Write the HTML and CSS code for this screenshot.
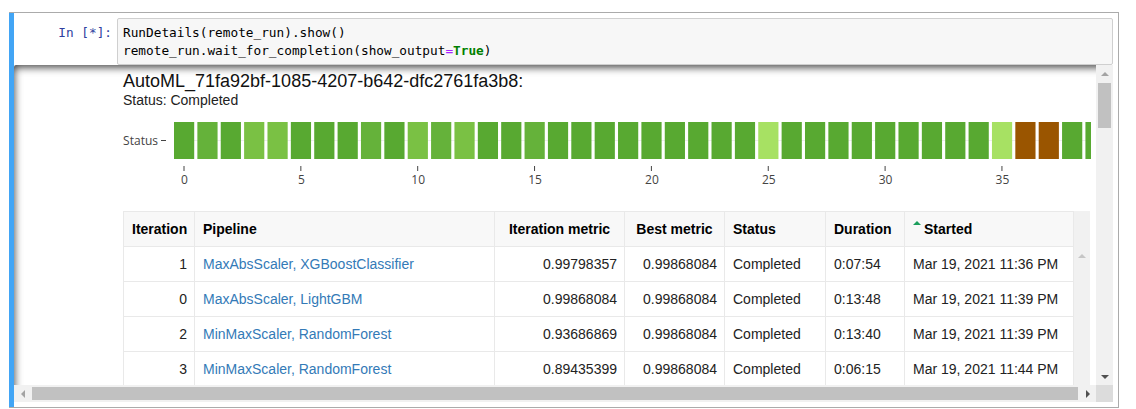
FILE: index.html
```html
<!DOCTYPE html>
<html>
<head>
<meta charset="utf-8">
<link rel="stylesheet" href="styles.css">
</head>
<body>
<div class="cell">
  <div class="input">
    <div class="prompt">In&nbsp;[*]:</div>
    <div class="code"><pre>RunDetails(remote_run).show()
remote_run.wait_for_completion(show_output<span class="op">=</span><span class="kw">True</span>)</pre></div>
  </div>
  <div class="output">
    <div class="viewport">
      <div class="widget">
        <div class="title">AutoML_71fa92bf-1085-4207-b642-dfc2761fa3b8:</div>
        <div class="status">Status: Completed</div>
        <svg class="chart" width="968" height="102" viewBox="0 0 968 102">
          <line class="grid" x1="51" y1="31.5" x2="968" y2="31.5"/>
          <text class="ylabel" x="35" y="36" text-anchor="end">Status</text>
          <line class="tick" x1="38" y1="31.5" x2="43" y2="31.5"/>
          <g class="bars">
            <rect class="b1" x="51" y="13" width="20.2" height="37"/>
            <rect class="b2" x="74.37" y="13" width="20.2" height="37"/>
            <rect class="b1" x="97.74" y="13" width="20.2" height="37"/>
            <rect class="b3" x="121.11" y="13" width="20.2" height="37"/>
            <rect class="b3" x="144.48" y="13" width="20.2" height="37"/>
            <rect class="b1" x="167.85" y="13" width="20.2" height="37"/>
            <rect class="b1" x="191.22" y="13" width="20.2" height="37"/>
            <rect class="b1" x="214.59" y="13" width="20.2" height="37"/>
            <rect class="b2" x="237.96" y="13" width="20.2" height="37"/>
            <rect class="b1" x="261.33" y="13" width="20.2" height="37"/>
            <rect class="b3" x="284.7" y="13" width="20.2" height="37"/>
            <rect class="b2" x="308.07" y="13" width="20.2" height="37"/>
            <rect class="b3" x="331.44" y="13" width="20.2" height="37"/>
            <rect class="b1" x="354.81" y="13" width="20.2" height="37"/>
            <rect class="b1" x="378.18" y="13" width="20.2" height="37"/>
            <rect class="b2" x="401.55" y="13" width="20.2" height="37"/>
            <rect class="b1" x="424.92" y="13" width="20.2" height="37"/>
            <rect class="b1" x="448.29" y="13" width="20.2" height="37"/>
            <rect class="b1" x="471.66" y="13" width="20.2" height="37"/>
            <rect class="b1" x="495.03" y="13" width="20.2" height="37"/>
            <rect class="b1" x="518.4" y="13" width="20.2" height="37"/>
            <rect class="b1" x="541.77" y="13" width="20.2" height="37"/>
            <rect class="b1" x="565.14" y="13" width="20.2" height="37"/>
            <rect class="b1" x="588.51" y="13" width="20.2" height="37"/>
            <rect class="b1" x="611.88" y="13" width="20.2" height="37"/>
            <rect class="b4" x="635.25" y="13" width="20.2" height="37"/>
            <rect class="b1" x="658.62" y="13" width="20.2" height="37"/>
            <rect class="b1" x="681.99" y="13" width="20.2" height="37"/>
            <rect class="b1" x="705.36" y="13" width="20.2" height="37"/>
            <rect class="b1" x="728.73" y="13" width="20.2" height="37"/>
            <rect class="b1" x="752.1" y="13" width="20.2" height="37"/>
            <rect class="b1" x="775.47" y="13" width="20.2" height="37"/>
            <rect class="b1" x="798.84" y="13" width="20.2" height="37"/>
            <rect class="b1" x="822.21" y="13" width="20.2" height="37"/>
            <rect class="b1" x="845.58" y="13" width="20.2" height="37"/>
            <rect class="b4" x="868.95" y="13" width="20.2" height="37"/>
            <rect class="b5" x="892.32" y="13" width="20.2" height="37"/>
            <rect class="b5" x="915.69" y="13" width="20.2" height="37"/>
            <rect class="b1" x="939.06" y="13" width="20.2" height="37"/>
            <rect class="b1" x="962.43" y="13" width="20.2" height="37"/>
          </g>
          <g class="xticks">
            <line x1="61" y1="57" x2="61" y2="62"/>
            <line x1="177.85" y1="57" x2="177.85" y2="62"/>
            <line x1="294.7" y1="57" x2="294.7" y2="62"/>
            <line x1="411.55" y1="57" x2="411.55" y2="62"/>
            <line x1="528.4" y1="57" x2="528.4" y2="62"/>
            <line x1="645.25" y1="57" x2="645.25" y2="62"/>
            <line x1="762.1" y1="57" x2="762.1" y2="62"/>
            <line x1="878.95" y1="57" x2="878.95" y2="62"/>
          </g>
          <g class="xlabels" text-anchor="middle">
            <text x="61.5" y="75">0</text>
            <text x="178.35" y="75">5</text>
            <text x="295.2" y="75">10</text>
            <text x="412.05" y="75">15</text>
            <text x="528.9" y="75">20</text>
            <text x="645.75" y="75">25</text>
            <text x="762.6" y="75">30</text>
            <text x="879.45" y="75">35</text>
          </g>
        </svg>
        <div class="tablewrap">
          <table class="runs">
            <colgroup>
              <col class="c-it"><col class="c-pipe"><col class="c-im"><col class="c-bm"><col class="c-st"><col class="c-du"><col class="c-sd">
            </colgroup>
            <thead>
              <tr>
                <th>Iteration</th>
                <th>Pipeline</th>
                <th class="center">Iteration metric</th>
                <th class="center">Best metric</th>
                <th>Status</th>
                <th>Duration</th>
                <th><span class="sort"></span>Started</th>
              </tr>
            </thead>
            <tbody>
              <tr>
                <td class="num">1</td><td><a class="link">MaxAbsScaler, XGBoostClassifier</a></td><td class="num">0.99798357</td><td class="num">0.99868084</td><td>Completed</td><td>0:07:54</td><td>Mar 19, 2021 11:36 PM</td>
              </tr>
              <tr>
                <td class="num">0</td><td><a class="link">MaxAbsScaler, LightGBM</a></td><td class="num">0.99868084</td><td class="num">0.99868084</td><td>Completed</td><td>0:13:48</td><td>Mar 19, 2021 11:39 PM</td>
              </tr>
              <tr>
                <td class="num">2</td><td><a class="link">MinMaxScaler, RandomForest</a></td><td class="num">0.93686869</td><td class="num">0.99868084</td><td>Completed</td><td>0:13:40</td><td>Mar 19, 2021 11:39 PM</td>
              </tr>
              <tr>
                <td class="num">3</td><td><a class="link">MinMaxScaler, RandomForest</a></td><td class="num">0.89435399</td><td class="num">0.99868084</td><td>Completed</td><td>0:06:15</td><td>Mar 19, 2021 11:44 PM</td>
              </tr>
            </tbody>
          </table>
          <div class="tscroll">
            <div class="tbtn"><span class="arr up faint"></span></div>
          </div>
        </div>
      </div>
    </div>
    <div class="vbar">
      <div class="sbtn"><span class="arr up mid"></span></div>
      <div class="vthumb"></div>
      <div class="fill"></div>
      <div class="sbtn"><span class="arr down dark"></span></div>
    </div>
    <div class="hbar">
      <div class="sbtn"><span class="arr left mid"></span></div>
      <div class="hthumb"></div>
      <div class="sbtn"><span class="arr right dark"></span></div>
    </div>
    <div class="corner"></div>
  </div>
</div>
</body>
</html>
```

FILE: styles.css
```css
html, body {
  margin: 0;
  padding: 0;
  background: #ffffff;
}

body {
  font-family: "Liberation Sans", Arial, sans-serif;
  color: #000;
}

.cell {
  margin: 12px 0 0 9px;
  width: 1099px;
  padding: 5px;
  border: 1px solid #ababab;
  border-left: 0;
  background: linear-gradient(to right, #42a5f5 5px, #ffffff 5px);
}

.input {
  display: flex;
}

.prompt {
  width: 103px;
  box-sizing: border-box;
  padding: 6px 5px 0 0;
  text-align: right;
  font-family: "DejaVu Sans Mono", monospace;
  font-size: 12.75px;
  line-height: 18px;
  color: #303f9f;
}

.code {
  flex: 1;
  border: 1px solid #cfcfcf;
  border-radius: 2px;
  background: #f7f7f7;
  padding: 5px 5px 4px 5px;
}

.code pre {
  margin: 0;
  font-family: "DejaVu Sans Mono", monospace;
  font-size: 12.75px;
  line-height: 18px;
  color: #000;
}

.op { color: #aa22ff; }
.kw { color: #008000; font-weight: bold; }

.output {
  display: grid;
  grid-template-columns: 1082px 17px;
  grid-template-rows: 320px 17px;
  box-shadow: inset 0 2px 8px rgba(0, 0, 0, 0.8);
  border-radius: 2px;
}

.viewport {
  overflow: hidden;
}

.widget {
  padding: 5px 0 0 109px;
}

.title {
  font-size: 18px;
  line-height: 22px;
  color: #111;
  white-space: nowrap;
}

.status {
  font-size: 14px;
  line-height: 17px;
  color: #222;
}

.chart {
  display: block;
}

.chart .grid { stroke: #eeeeee; stroke-width: 1; }
.chart .tick { stroke: #444; stroke-width: 1; }
.chart .xticks line { stroke: #444; stroke-width: 1; }
.chart text {
  font-family: "Open Sans", Verdana, sans-serif;
  font-size: 12px;
  fill: #444;
}

.b1 { fill: #58a931; }
.b2 { fill: #65b23a; }
.b3 { fill: #7ac144; }
.b4 { fill: #a7e163; }
.b5 { fill: #9a5500; }

.tablewrap {
  display: flex;
  width: 967px;
}

.runs {
  border-collapse: collapse;
  table-layout: fixed;
  width: 950px;
  font-size: 14px;
  color: #222;
}

.c-it { width: 71px; }
.c-pipe { width: 300px; }
.c-im { width: 130px; }
.c-bm { width: 100px; }
.c-st { width: 101px; }
.c-du { width: 79px; }
.c-sd { width: 169px; }

.runs th,
.runs td {
  border: 1px solid #e9e9e9;
  height: 35px;
  padding: 0 8px;
  text-align: left;
  white-space: nowrap;
  overflow: hidden;
  box-sizing: border-box;
}

.runs th {
  background: #f8f8f8;
  font-weight: bold;
  color: #000;
}

.runs td {
  background: #ffffff;
}

.runs th.center { text-align: center; }
.runs td.num { text-align: right; padding-right: 7px; }

.link {
  color: #337ab7;
  text-decoration: none;
}

.sort {
  display: inline-block;
  width: 0;
  height: 0;
  border-left: 4px solid transparent;
  border-right: 4px solid transparent;
  border-bottom: 4px solid #1b9e5c;
  margin-right: 3px;
  vertical-align: 9px;
}

.tscroll {
  width: 17px;
  background: #f1f1f1;
}

.tbtn {
  margin-top: 36px;
  height: 17px;
  display: flex;
  align-items: center;
  justify-content: center;
}

.vbar {
  background: #f1f1f1;
  display: flex;
  flex-direction: column;
}

.hbar {
  background: #f1f1f1;
  display: flex;
}

.corner {
  background: #dcdcdc;
}

.sbtn {
  width: 17px;
  height: 17px;
  flex: none;
  display: flex;
  align-items: center;
  justify-content: center;
}

.vthumb {
  margin: 1px 2px 0 2px;
  height: 45px;
  background: #c1c1c1;
}

.fill { flex: 1; }

.hthumb {
  margin: 2px 1px 2px 1px;
  width: 1046px;
  background: #c1c1c1;
}

.arr {
  display: block;
  width: 0;
  height: 0;
}

.arr.up {
  border-left: 4px solid transparent;
  border-right: 4px solid transparent;
  border-bottom: 4px solid #a3a3a3;
}

.arr.down {
  border-left: 4px solid transparent;
  border-right: 4px solid transparent;
  border-top: 4px solid #505050;
}

.arr.left {
  border-top: 4px solid transparent;
  border-bottom: 4px solid transparent;
  border-right: 4px solid #a3a3a3;
}

.arr.right {
  border-top: 4px solid transparent;
  border-bottom: 4px solid transparent;
  border-left: 4px solid #505050;
}

.arr.up.faint { border-bottom-color: #c6c6c6; }
.arr.up.mid { border-bottom-color: #a3a3a3; }
.arr.left.mid { border-right-color: #a3a3a3; }
```
